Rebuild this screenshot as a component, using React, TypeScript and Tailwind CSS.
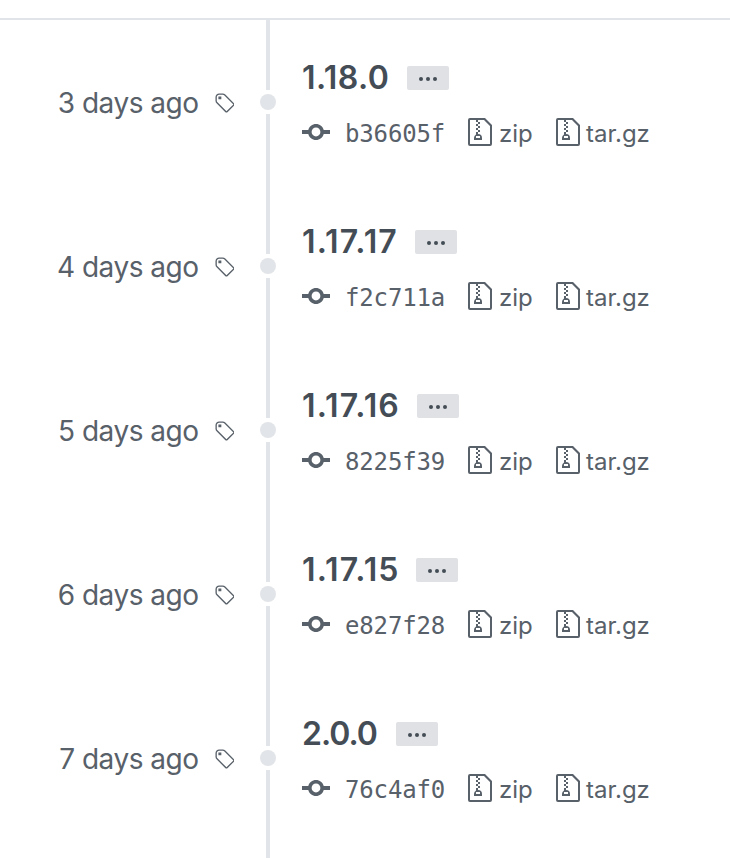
type Release = {
  age: string;
  version: string;
  commit: string;
  titleClass: string;
};

const releases: Release[] = [
  { age: "3 days ago", version: "1.18.0", commit: "b36605f", titleClass: "w-[105px] tracking-[0.45px]" },
  { age: "4 days ago", version: "1.17.17", commit: "f2c711a", titleClass: "w-[113px] tracking-[1.1px]" },
  { age: "5 days ago", version: "1.17.16", commit: "8225f39", titleClass: "w-[115px] tracking-[1.1px]" },
  { age: "6 days ago", version: "1.17.15", commit: "e827f28", titleClass: "w-[114px] tracking-[1.1px]" },
  { age: "7 days ago", version: "2.0.0", commit: "76c4af0", titleClass: "w-[94px] tracking-[-1px]" },
];

function TagIcon() {
  return (
    <svg className="h-[23.4px] w-[20.5px] shrink-0" viewBox="0 0 14 16" fill="currentColor" aria-hidden="true">
      <path
        fillRule="evenodd"
        d="M7.73 1.73C7.26 1.26 6.62 1 5.96 1H3.5C2.13 1 1 2.13 1 3.5v2.47c0 .66.27 1.3.73 1.77l6.06 6.06c.39.39 1.02.39 1.41 0l4.59-4.59a.996.996 0 000-1.41L7.73 1.73zM2.38 7.09c-.31-.3-.47-.7-.47-1.13V3.5c0-.88.72-1.59 1.59-1.59h2.47c.42 0 .83.16 1.13.47l6.14 6.13-4.73 4.73-6.13-6.15zM3.01 3h2v2H3V3h.01z"
      />
    </svg>
  );
}

function CommitIcon() {
  return (
    <svg className="h-8 w-7 shrink-0" viewBox="0 0 14 16" fill="currentColor" aria-hidden="true">
      <path
        fillRule="evenodd"
        d="M10.86 7c-.45-1.72-2-3-3.86-3-1.86 0-3.41 1.28-3.86 3H0v2h3.14c.45 1.72 2 3 3.86 3 1.86 0 3.41-1.28 3.86-3H14V7h-3.14zM7 10.2c-1.22 0-2.2-.98-2.2-2.2 0-1.22.98-2.2 2.2-2.2 1.22 0 2.2.98 2.2 2.2 0 1.22-.98 2.2-2.2 2.2z"
      />
    </svg>
  );
}

function ZipIcon() {
  return (
    <svg className="h-8 w-6 shrink-0" viewBox="0 0 12 16" fill="currentColor" aria-hidden="true">
      <path
        fillRule="evenodd"
        d="M8.5 1H1a1 1 0 00-1 1v12a1 1 0 001 1h10a1 1 0 001-1V4.5L8.5 1zM11 14H1V2h3v1h1V2h3l3 3v9zM5 4V3h1v1H5zM4 4h1v1H4V4zm1 2V5h1v1H5zM4 6h1v1H4V6zm1 2V7h1v1H5zM4 9.28A2 2 0 003 11v1h4v-1a2 2 0 00-2-2V8H4v1.28zM6 10v1H4v-1h2z"
      />
    </svg>
  );
}

function ReleaseRow({ age, version, commit, titleClass }: Release) {
  return (
    <li className="flex h-[164px]">
      <div className="flex w-[256px] shrink-0 justify-end pt-[65px] pr-[22px]">
        <span className="mr-[15px] text-[28px] leading-9 tracking-[-0.5px] whitespace-nowrap">{age}</span>
        <span className="pt-[7px]">
          <TagIcon />
        </span>
      </div>
      <div className="flex w-6 shrink-0 flex-col items-center">
        <div className="h-[70px] w-1 bg-[#e1e4e8]" />
        <div className="my-1 size-4 rounded-full bg-[#e1e4e8]" />
        <div className="w-1 grow bg-[#e1e4e8]" />
      </div>
      <div className="pt-9 pl-[22px]">
        <div className="flex h-10 items-center">
          <h4 className={`${titleClass} mt-[3px] shrink-0 text-[32px] leading-10 font-semibold text-[#444d56]`}>
            {version}
          </h4>
          <button
            type="button"
            aria-label="Toggle commit message"
            className="mt-[3px] flex h-6 w-[42px] items-center justify-center gap-[3px] rounded-[2px] bg-[#dfe1e5] pt-0.5 text-[#444d56]"
          >
            <span className="size-1 rounded-full bg-current" />
            <span className="size-1 rounded-full bg-current" />
            <span className="size-1 rounded-full bg-current" />
          </button>
        </div>
        <div className="mt-5 flex h-8 items-center text-2xl leading-8">
          <CommitIcon />
          <span className="mt-1 ml-[15px] w-[123px] font-['DejaVu_Sans_Mono',monospace] tracking-[-0.15px]">{commit}</span>
          <ZipIcon />
          <span className="mt-1 ml-[7px] w-[57px]">zip</span>
          <ZipIcon />
          <span className="mt-1 ml-[6px]">tar.gz</span>
        </div>
      </div>
    </li>
  );
}

export default function App() {
  return (
    <main className="h-[858px] w-[730px] overflow-hidden bg-white pt-[18px] font-['Inter',sans-serif] text-[#586069]">
      <ul className="border-t-2 border-[#e1e4e8]">
        {releases.map((release) => (
          <ReleaseRow key={release.version} {...release} />
        ))}
      </ul>
      <div className="ml-[266px] h-[18px] w-1 bg-[#e1e4e8]" />
    </main>
  );
}
